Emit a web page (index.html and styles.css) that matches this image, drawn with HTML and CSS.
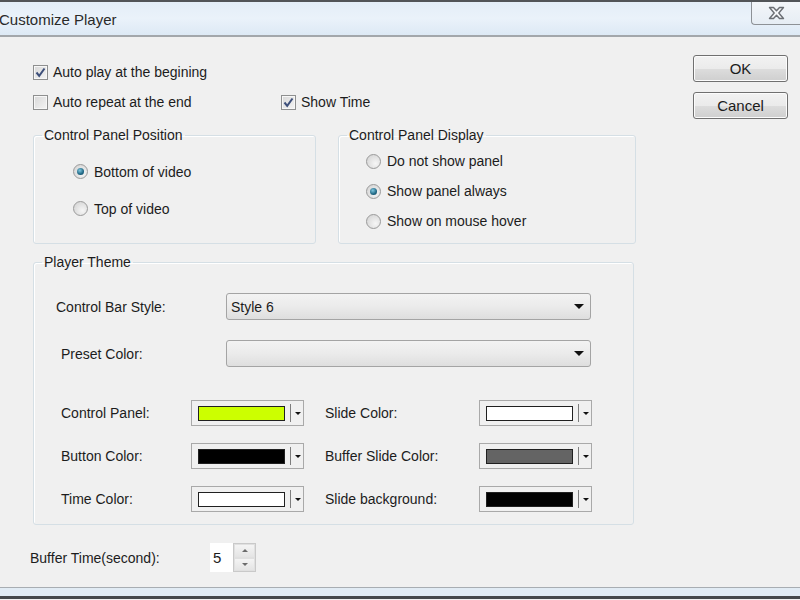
FILE: index.html
```html
<!DOCTYPE html>
<html lang="en">
<head>
    <meta charset="UTF-8">
    <title>Customize Player</title>
    <link rel="stylesheet" href="styles.css">
</head>
<body>
    <div class="titlebar">
        <span class="title">Customize Player</span>
        <div class="close-btn">
            <svg width="17" height="14" viewBox="0 0 17 14">
                <path d="M1.5 1.5 H5.5 L8.5 4.8 L11.5 1.5 H15.5 L10.8 7 L15.5 12.5 H11.5 L8.5 9.2 L5.5 12.5 H1.5 L6.2 7 Z" fill="#f4f6f8" stroke="#6b6f74" stroke-width="1.4" stroke-linejoin="round"/>
            </svg>
        </div>
    </div>

    <div class="dialog-body">
        <div class="top">
            <div class="main">
                <div class="check-row">
                    <label class="check"><span class="box checked"></span>Auto play at the begining</label>
                </div>
                <div class="check-row">
                    <label class="check wide"><span class="box"></span>Auto repeat at the end</label>
                    <label class="check"><span class="box checked"></span>Show Time</label>
                </div>

                <div class="groups">
                    <fieldset class="group position">
                        <legend>Control Panel Position</legend>
                        <label class="radio"><span class="dot on"></span>Bottom of video</label>
                        <label class="radio"><span class="dot"></span>Top of video</label>
                    </fieldset>
                    <fieldset class="group display">
                        <legend>Control Panel Display</legend>
                        <label class="radio"><span class="dot"></span>Do not show panel</label>
                        <label class="radio"><span class="dot on"></span>Show panel always</label>
                        <label class="radio"><span class="dot"></span>Show on mouse hover</label>
                    </fieldset>
                </div>

                <fieldset class="group theme">
                    <legend>Player Theme</legend>
                    <div class="select-row">
                        <span class="field-label">Control Bar Style:</span>
                        <div class="select"><span>Style 6</span><i class="arrow"></i></div>
                    </div>
                    <div class="select-row">
                        <span class="field-label indent">Preset Color:</span>
                        <div class="select"><span></span><i class="arrow"></i></div>
                    </div>
                    <div class="colors" id="colors"></div>
                </fieldset>
            </div>

            <div class="actions">
                <button class="btn ok">OK</button>
                <button class="btn">Cancel</button>
            </div>
        </div>

        <div class="buffer-row">
            <span class="buffer-label">Buffer Time(second):</span>
            <div class="spin">
                <span class="spin-value">5</span>
                <div class="spin-btns">
                    <span class="spin-up"></span>
                    <span class="spin-down"></span>
                </div>
            </div>
        </div>
    </div>

    <div class="statusbar"></div>

    <script>
        // colour pickers of the theme group
        const colorRows = [
            ['Control Panel:', '#ccff00', 'Slide Color:', '#ffffff'],
            ['Button Color:', '#000000', 'Buffer Slide Color:', '#646464'],
            ['Time Color:', '#ffffff', 'Slide background:', '#000000']
        ];

        function picker(color) {
            return '<div class="picker"><span class="swatch" style="background:' + color + '"></span>' +
                '<span class="sep"></span><i class="mini-arrow"></i></div>';
        }

        const colors = document.getElementById('colors');
        colorRows.forEach(row => {
            colors.innerHTML +=
                '<span class="field-label">' + row[0] + '</span>' + picker(row[1]) +
                '<span class="field-label">' + row[2] + '</span>' + picker(row[3]);
        });
    </script>
</body>
</html>
```

FILE: styles.css
```css
body {
    margin: 0;
    width: 800px;
    height: 600px;
    overflow: hidden;
    background-color: #f0f0f0;
    font-family: "Liberation Sans", Arial, sans-serif;
    font-size: 14px;
    color: #1c1c1c;
}

.titlebar {
    height: 33px;
    border-top: 2px solid #525558;
    border-bottom: 2px solid #a3a7ab;
    background: linear-gradient(#e4eef8, #eaf2fa 50%, #dde9f5);
    display: flex;
    align-items: center;
    justify-content: space-between;
}
.title {
    font-size: 15px;
    color: #2a2a2a;
    margin-left: -1px;
    margin-top: 2px;
}
.close-btn {
    align-self: flex-start;
    width: 48px;
    height: 22px;
    border-left: 1px solid #8d9196;
    border-bottom: 1px solid #8d9196;
    border-bottom-left-radius: 4px;
    background: linear-gradient(#f3f6f9, #e6edf4);
    display: flex;
    align-items: center;
    justify-content: center;
}

.dialog-body {
    height: 532px;
    padding: 18px 12px 0 33px;
}
.top {
    display: flex;
}
.main {
    width: 603px;
}

.check-row {
    display: flex;
    height: 30px;
    align-items: center;
}
.check-row:first-child {
    margin-top: 2px;
}
.check {
    display: flex;
    align-items: center;
}
.check.wide {
    width: 248px;
}
.box {
    width: 13px;
    height: 13px;
    margin-right: 5px;
    border: 1px solid #8e8f8f;
    background: linear-gradient(135deg, #d8d8d8, #f4f4f4);
    box-shadow: inset 0 0 0 1px #f7f7f7;
}
.box.checked {
    background:
        url("data:image/svg+xml;utf8,<svg xmlns='http://www.w3.org/2000/svg' width='13' height='13'><path d='M2.5 6.5 L5.2 9.8 L10.5 2.5' fill='none' stroke='%233d4f7a' stroke-width='2'/></svg>") no-repeat center,
        linear-gradient(135deg, #d8d8d8, #f4f4f4);
}

.groups {
    display: flex;
    gap: 22px;
    margin-top: 10px;
}
.group {
    margin: 0;
    border: 1px solid #d5dfe5;
    border-radius: 3px;
    box-shadow: inset 1px 1px 0 #fff;
}
.group legend {
    padding: 0 2px;
    margin-left: 8px;
    line-height: 16px;
}
.position {
    width: 283px;
    padding: 10px 0 16px 39px;
    box-sizing: border-box;
}
.position legend {
    margin-left: -31px;
}
.display {
    width: 298px;
    padding: 3px 0 7px 27px;
    box-sizing: border-box;
}
.display legend {
    margin-left: -19px;
}
.radio {
    display: flex;
    align-items: center;
    height: 37px;
}
.display .radio {
    height: 30px;
}
.dot {
    width: 13px;
    height: 13px;
    margin-right: 6px;
    border: 1px solid #9a9a9a;
    border-radius: 50%;
    background: radial-gradient(circle at 65% 65%, #f6f6f6, #cfcfcf);
    display: flex;
    align-items: center;
    justify-content: center;
}
.dot.on::after {
    content: "";
    width: 7px;
    height: 7px;
    border-radius: 50%;
    background: radial-gradient(circle at 40% 35%, #7fc7df, #1f6784 60%, #123f55);
}

.theme {
    width: 601px;
    margin-top: 10px;
    padding: 23px 0 12px 0;
    box-sizing: border-box;
}
.select-row {
    display: flex;
    align-items: center;
    padding-left: 22px;
    margin-bottom: 20px;
}
.field-label {
    white-space: nowrap;
}
.select-row .field-label {
    width: 170px;
}
.field-label.indent {
    width: 165px;
    padding-left: 5px;
}
.select {
    height: 25px;
    border: 1px solid #a4a4a4;
    border-radius: 3px;
    background: linear-gradient(#f3f3f3, #ebebeb 50%, #dedede);
    display: flex;
    align-items: center;
    justify-content: space-between;
    padding-left: 4px;
    width: 359px;
}
.arrow {
    width: 0;
    height: 0;
    margin-right: 6px;
    border-left: 5px solid transparent;
    border-right: 5px solid transparent;
    border-top: 5px solid #111;
}

.colors {
    display: grid;
    grid-template-columns: 130px 134px 154px 112px;
    row-gap: 17px;
    align-items: center;
    padding-left: 27px;
    margin-top: 33px;
}
.picker {
    width: 111px;
    height: 24px;
    border: 1px solid #a9a9a9;
    background-color: #f0f0f0;
    display: flex;
    align-items: center;
}
.swatch {
    width: 85px;
    height: 13px;
    margin-left: 6px;
    border: 1px solid #202020;
}
.sep {
    width: 1px;
    height: 18px;
    margin-left: 5px;
    background-color: #7d7d7d;
}
.mini-arrow {
    width: 0;
    height: 0;
    margin-left: 4px;
    border-left: 3px solid transparent;
    border-right: 3px solid transparent;
    border-top: 3px solid #111;
}

.actions {
    margin-left: auto;
    display: flex;
    flex-direction: column;
    gap: 10px;
}
.btn {
    width: 95px;
    height: 27px;
    border: 1px solid #707070;
    border-radius: 3px;
    background: linear-gradient(#f2f2f2, #ebebeb 50%, #dddddd 51%, #cfcfcf);
    box-shadow: inset 0 0 0 1px #fcfcfc;
    font-family: "Liberation Sans", Arial, sans-serif;
    font-size: 15px;
    color: #1c1c1c;
    padding: 0;
}

.buffer-row {
    display: flex;
    align-items: center;
    margin-top: 18px;
    margin-left: -3px;
}
.buffer-label {
    width: 180px;
}
.spin {
    display: flex;
    height: 29px;
    width: 46px;
}
.spin-value {
    width: 23px;
    background-color: #fff;
    font-size: 15px;
    line-height: 29px;
    padding-left: 3px;
    box-sizing: border-box;
}
.spin-btns {
    width: 23px;
    display: flex;
    flex-direction: column;
    border: 1px solid #c9c9c9;
    box-sizing: border-box;
}
.spin-up, .spin-down {
    flex: 1;
    background: linear-gradient(#f4f4f4, #e4e4e4);
    border: 1px solid #e0e0e0;
    display: flex;
    align-items: center;
    justify-content: center;
}
.spin-up::after {
    content: "";
    border-left: 3px solid transparent;
    border-right: 3px solid transparent;
    border-bottom: 3px solid #6b6b6b;
}
.spin-down::after {
    content: "";
    border-left: 3px solid transparent;
    border-right: 3px solid transparent;
    border-top: 3px solid #6b6b6b;
}

.statusbar {
    height: 8px;
    border-top: 1px solid #a8adb2;
    border-bottom: 3px solid #45484b;
    background-color: #e1ebf4;
}
```
